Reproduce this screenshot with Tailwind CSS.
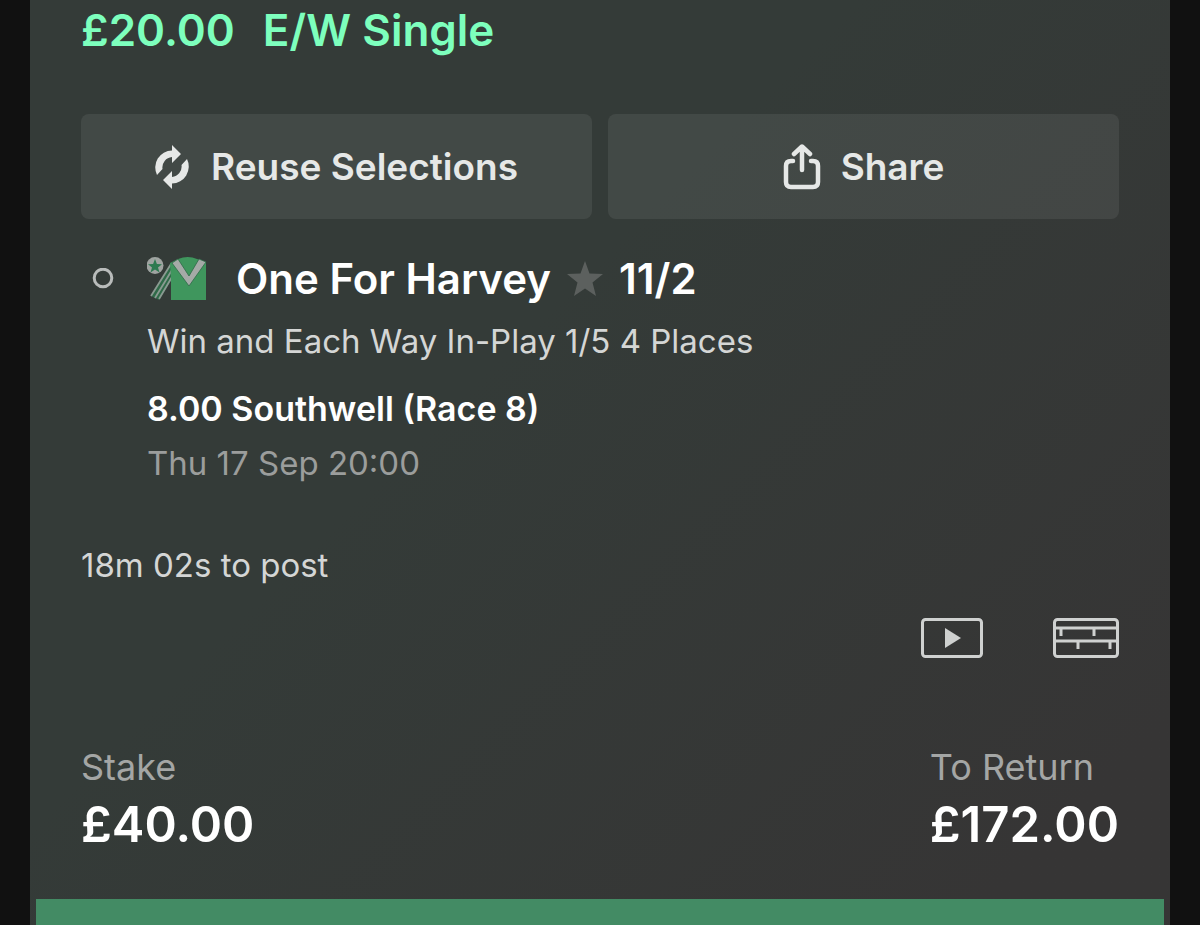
<!DOCTYPE html>
<html lang="en">
<head>
    <meta charset="UTF-8">
    <meta name="viewport" content="width=device-width, initial-scale=1.0">
    <title>My Bets</title>
    <script src="https://cdn.jsdelivr.net/npm/@tailwindcss/browser@4"></script>
</head>
<body class="bg-[#111111] px-[30px] font-['Inter','Liberation_Sans',sans-serif] text-[#d4d6d5]">
<main class="min-h-screen flex flex-col bg-linear-135 from-[#343b38] from-40% to-[#363535] to-90%">
    <div class="px-[51px]">
        <h1 class="flex gap-7 pt-1 text-[44px] leading-[52px] font-semibold text-[#7dffbd]">
            <span>£20.00</span>
            <span>E/W Single</span>
        </h1>

        <div class="mt-[58px] grid grid-cols-2 gap-4">
            <button type="button" class="h-[105px] flex items-center justify-center gap-5 rounded-lg bg-white/7 text-[37px] font-semibold text-[#e6e8e7]">
                <svg class="w-9 h-11" viewBox="0 0 36 44" fill="currentColor" aria-hidden="true">
                    <path d="M17 0L26 9L17 18V12A10.500 10.500 0 0 0 7.500 24L2 30A17 17 0 0 1 17 5.500Z"/>
                    <path d="M17 44L8 35L17 26V32A10.500 10.500 0 0 0 26.500 20L32 14A17 17 0 0 1 17 38.500Z"/>
                </svg>
                Reuse Selections
            </button>
            <button type="button" class="h-[105px] flex items-center justify-center gap-5 rounded-lg bg-white/7 text-[37px] font-semibold text-[#e6e8e7]">
                <svg class="w-[38px] h-[46px]" viewBox="0 0 38 46" fill="none" stroke="currentColor" stroke-width="4.500" stroke-linecap="round" stroke-linejoin="round" aria-hidden="true">
                    <path d="M10 17H8Q3 17 3 22V38Q3 43 8 43H30Q35 43 35 38V22Q35 17 30 17H28"/>
                    <path d="M19 26V3M11 10L19 2.500L27 10"/>
                </svg>
                Share
            </button>
        </div>

        <section class="mt-[34px] pl-[66px]">
            <div class="-ml-[55px] flex items-center">
                <svg class="w-[22px] h-[22px] mr-[33px]" viewBox="0 0 22 22" fill="none" stroke="#b9bcbb" stroke-width="3" aria-hidden="true">
                    <circle cx="11" cy="10" r="8.800"/>
                </svg>
                <svg class="w-[60px] h-11 mr-[29px]" viewBox="0 0 60 44" aria-hidden="true">
                    <circle cx="8" cy="8.500" r="8.500" fill="#9fa4a1"/>
                    <path d="M8 2L9.900 7L15 7.200L11 10.400L12.500 15.500L8 12.500L3.500 15.500L5 10.400L1 7.200L6.100 7Z" fill="#2d7a50"/>
                    <path d="M25 6L4 39L12 43L25 22Z" fill="#2f6a48"/>
                    <path d="M24 7L4 39M25 13L8 41M25 20L12 42" stroke="#8a9a91" stroke-width="1.800"/>
                    <path d="M23 6L31 2Q41 -2 50 2L59 5V43H24V20Z" fill="#3f965d"/>
                    <path d="M25 6L31 2L42 19L52 2L59 5L42 29Z" fill="#a5aaa7" stroke="#2f6a48" stroke-width=".800"/>
                </svg>
                <h2 class="text-[42px] leading-[52px] font-semibold text-white">One For Harvey</h2>
                <svg class="w-9 h-9 mx-4" viewBox="0 0 36 36" fill="#5c605e" aria-hidden="true">
                    <path d="M18 0L22.500 12.500L36 13L25.500 21.500L29 35L18 27.500L7 35L10.500 21.500L0 13L13.500 12.500Z"/>
                </svg>
                <span class="text-[42px] leading-[52px] font-semibold text-white">11/2</span>
            </div>
            <p class="mt-4 text-[33px] leading-10">Win and Each Way In-Play 1/5 4 Places</p>
            <h3 class="mt-7 text-[34px] leading-10 font-semibold text-white">8.00 Southwell (Race 8)</h3>
            <p class="mt-3.5 text-[33px] leading-10 text-[#9b9d9c]">Thu 17 Sep 20:00</p>
        </section>

        <p class="mt-[62px] text-[33px] leading-10">18m 02s to post</p>

        <div class="mt-[33px] flex justify-end gap-[70px]">
            <button type="button" aria-label="Watch live">
                <svg class="w-[62px] h-10" viewBox="0 0 62 40" aria-hidden="true">
                    <rect x="1.500" y="1.500" width="59" height="37" rx="3" fill="none" stroke="#cfd1d0" stroke-width="3"/>
                    <path d="M24 10L40 20L24 30Z" fill="#cfd1d0"/>
                </svg>
            </button>
            <button type="button" aria-label="Race card">
                <svg class="w-[66px] h-10" viewBox="0 0 66 40" fill="none" stroke="#cfd1d0" stroke-width="3" aria-hidden="true">
                    <rect x="1.500" y="1.500" width="63" height="37" rx="3"/>
                    <path d="M2 10H64M2 23H64M8 10V18M41 10V18M25 23V31M57 23V31"/>
                </svg>
            </button>
        </div>

        <dl class="mt-[87px] flex justify-between">
            <div>
                <dt class="text-4xl leading-11 text-[#a4a6a5]">Stake</dt>
                <dd class="mt-1.5 text-[49px] leading-[60px] font-semibold text-white">£40.00</dd>
            </div>
            <div>
                <dt class="text-4xl leading-11 text-[#a4a6a5]">To Return</dt>
                <dd class="mt-1.5 text-[49px] leading-[60px] font-semibold text-white">£172.00</dd>
            </div>
        </dl>
    </div>
    <div class="mt-auto mx-1.5 h-[26px] bg-[#438b64]"></div>
</main>
</body>
</html>
